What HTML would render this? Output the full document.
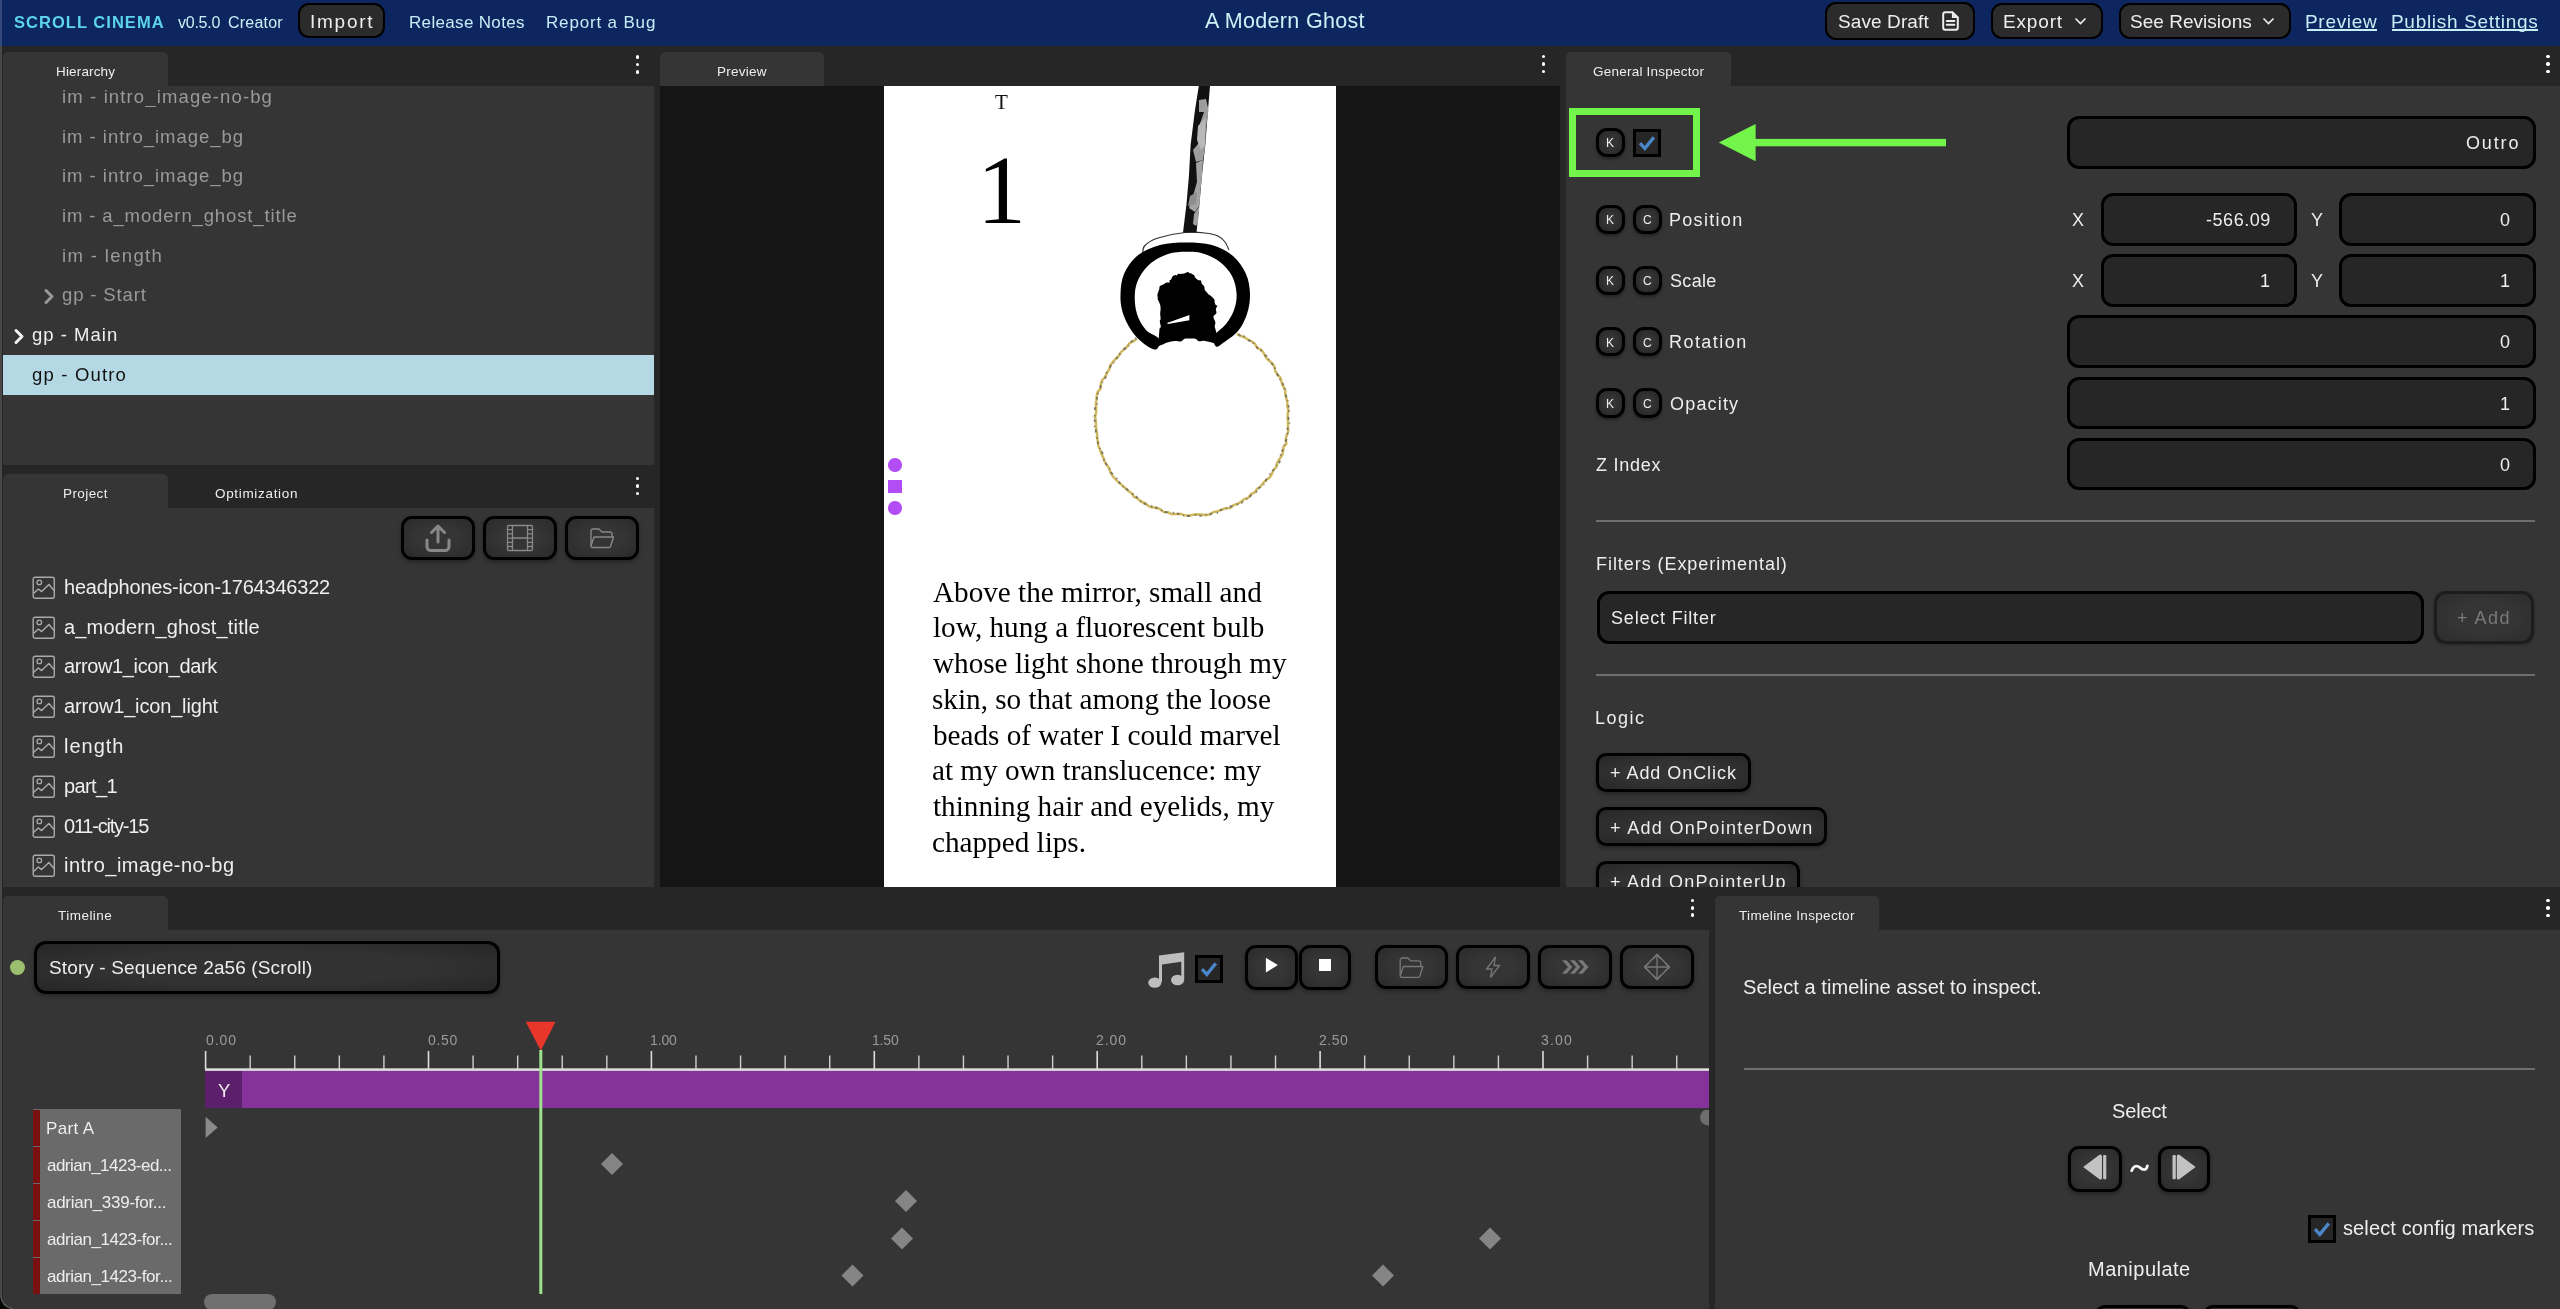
<!DOCTYPE html>
<html><head><meta charset="utf-8"><title>Scroll Cinema</title>
<style>
html,body{margin:0;padding:0;}
body{width:2560px;height:1309px;overflow:hidden;position:relative;background:#262626;font-family:"Liberation Sans",sans-serif;}
body>div,body>svg,div>svg{position:absolute;}
.t{position:absolute;white-space:pre;line-height:1;will-change:transform;}
</style></head><body>
<div style="left:0px;top:0px;width:2560px;height:46px;background:#0d2660;"></div>
<div class="t" style="left:13.50px;top:14.10px;font-family:'Liberation Sans';font-size:16.5px;color:#5cd4ec;font-weight:700;letter-spacing:1.033px;">SCROLL CINEMA</div>
<div class="t" style="left:178.30px;top:15.00px;font-family:'Liberation Sans';font-size:16px;color:#cdeff5;letter-spacing:-0.260px;">v0.5.0</div>
<div class="t" style="left:228.20px;top:15.00px;font-family:'Liberation Sans';font-size:16px;color:#cdeff5;letter-spacing:0.217px;">Creator</div>
<div style="left:298px;top:3.4px;width:87px;height:35px;background:#2b2b2b;border:2px solid #000;border-radius:11px;box-sizing:border-box;"></div>
<div class="t" style="left:310.10px;top:12.00px;font-family:'Liberation Sans';font-size:19px;color:#eeeeee;letter-spacing:1.740px;">Import</div>
<div class="t" style="left:408.70px;top:14.10px;font-family:'Liberation Sans';font-size:17px;color:#c6eef6;letter-spacing:0.333px;">Release Notes</div>
<div class="t" style="left:545.90px;top:14.10px;font-family:'Liberation Sans';font-size:17px;color:#c6eef6;letter-spacing:0.836px;">Report a Bug</div>
<div class="t" style="left:1204.70px;top:10.70px;font-family:'Liberation Sans';font-size:21.5px;color:#cdf2f7;letter-spacing:0.323px;">A Modern Ghost</div>
<div style="left:1824.6px;top:1.8px;width:150.4px;height:38px;background:#2b2b2b;border:2px solid #000;border-radius:11px;box-sizing:border-box;"></div>
<div class="t" style="left:1838.10px;top:11.90px;font-family:'Liberation Sans';font-size:19px;color:#eeeeee;letter-spacing:0.100px;">Save Draft</div>
<svg style="left:1942px;top:11px" width="18" height="20" viewBox="0 0 18 20"><path d="M3.2 1.2h7.3l5.3 5.3v10.3a2 2 0 0 1-2 2H3.2a2 2 0 0 1-2-2V3.2a2 2 0 0 1 2-2z" fill="none" stroke="#eee" stroke-width="2"/><path d="M10.5 1.5v5h5z" fill="#ddd" stroke="#eee" stroke-width="1.2"/><path d="M4.8 9.9h7.5M4.8 13.8h7.5" stroke="#eee" stroke-width="2" stroke-linecap="round"/></svg>
<div style="left:1990.5px;top:3.3px;width:112px;height:35.4px;background:#2b2b2b;border:2px solid #000;border-radius:11px;box-sizing:border-box;"></div>
<div class="t" style="left:2002.80px;top:11.90px;font-family:'Liberation Sans';font-size:19px;color:#eeeeee;letter-spacing:0.840px;">Export</div>
<svg style="left:2074px;top:17px" width="13" height="8" viewBox="0 0 13 8"><path d="M1.5 1.5l5 5 5-5" fill="none" stroke="#eee" stroke-width="1.6"/></svg>
<div style="left:2118.5px;top:3.2px;width:172.5px;height:35.4px;background:#2b2b2b;border:2px solid #000;border-radius:11px;box-sizing:border-box;"></div>
<div class="t" style="left:2130.20px;top:11.90px;font-family:'Liberation Sans';font-size:19px;color:#eeeeee;letter-spacing:0.025px;">See Revisions</div>
<svg style="left:2262px;top:17px" width="13" height="8" viewBox="0 0 13 8"><path d="M1.5 1.5l5 5 5-5" fill="none" stroke="#eee" stroke-width="1.6"/></svg>
<div class="t" style="left:2304.80px;top:11.90px;font-family:'Liberation Sans';font-size:19px;color:#c6eef6;letter-spacing:0.700px;">Preview</div>
<div style="left:2306.6px;top:29px;width:70.4px;height:1.6px;background:#c6eef6;"></div>
<div class="t" style="left:2391.00px;top:11.90px;font-family:'Liberation Sans';font-size:19px;color:#c6eef6;letter-spacing:0.700px;">Publish Settings</div>
<div style="left:2392px;top:29px;width:145.5px;height:1.6px;background:#c6eef6;"></div>
<div style="left:0px;top:0px;width:2px;height:1309px;background:rgba(255,255,255,.16);"></div>
<div style="left:3px;top:52px;width:165px;height:34px;background:#353535;border-radius:5px 5px 0 0;"></div>
<div class="t" style="left:55.75px;top:65.25px;font-family:'Liberation Sans';font-size:13.5px;color:#eeeeee;letter-spacing:0.156px;">Hierarchy</div>
<div style="left:3px;top:86px;width:651px;height:379px;background:#353535;overflow:hidden;"></div>
<div style="left:635.6px;top:55.4px;width:3.6px;height:3.6px;background:#fff;border-radius:50%;"></div>
<div style="left:635.6px;top:62.8px;width:3.6px;height:3.6px;background:#fff;border-radius:50%;"></div>
<div style="left:635.6px;top:70.2px;width:3.6px;height:3.6px;background:#fff;border-radius:50%;"></div>
<div class="t" style="left:62.00px;top:88.00px;font-family:'Liberation Sans';font-size:18.5px;color:#9a9a9a;letter-spacing:1.133px;clip-path:inset(-17px 0 0 0);">im - intro_image-no-bg</div>
<div class="t" style="left:62.00px;top:127.70px;font-family:'Liberation Sans';font-size:18.5px;color:#9a9a9a;letter-spacing:0.972px;">im - intro_image_bg</div>
<div class="t" style="left:62.00px;top:167.40px;font-family:'Liberation Sans';font-size:18.5px;color:#9a9a9a;letter-spacing:0.972px;">im - intro_image_bg</div>
<div class="t" style="left:62.00px;top:207.10px;font-family:'Liberation Sans';font-size:18.5px;color:#9a9a9a;letter-spacing:0.867px;">im - a_modern_ghost_title</div>
<div class="t" style="left:62.00px;top:246.80px;font-family:'Liberation Sans';font-size:18.5px;color:#9a9a9a;letter-spacing:1.350px;">im - length</div>
<svg style="left:42px;top:287px" width="14" height="19" viewBox="0 0 14 19"><path d="M4 3.5l6 6-6 6" fill="none" stroke="#9a9a9a" stroke-width="3" stroke-linecap="round" stroke-linejoin="round"/></svg>
<div class="t" style="left:61.50px;top:286.30px;font-family:'Liberation Sans';font-size:18.5px;color:#9a9a9a;letter-spacing:0.856px;">gp - Start</div>
<svg style="left:12px;top:327px" width="14" height="19" viewBox="0 0 14 19"><path d="M4 3.5l6 6-6 6" fill="none" stroke="#f2f2f2" stroke-width="3" stroke-linecap="round" stroke-linejoin="round"/></svg>
<div class="t" style="left:32.40px;top:326.30px;font-family:'Liberation Sans';font-size:18.5px;color:#f0f0f0;letter-spacing:1.013px;">gp - Main</div>
<div style="left:3px;top:355px;width:651px;height:40px;background:#b4d8e4;"></div>
<div class="t" style="left:32.00px;top:365.80px;font-family:'Liberation Sans';font-size:18.5px;color:#111111;letter-spacing:1.178px;">gp - Outro</div>
<div style="left:3px;top:474px;width:165px;height:34px;background:#353535;border-radius:5px 5px 0 0;"></div>
<div class="t" style="left:62.50px;top:486.80px;font-family:'Liberation Sans';font-size:13.5px;color:#eeeeee;letter-spacing:0.417px;">Project</div>
<div class="t" style="left:215.00px;top:486.80px;font-family:'Liberation Sans';font-size:13.5px;color:#eeeeee;letter-spacing:0.673px;">Optimization</div>
<div style="left:3px;top:508px;width:651px;height:379px;background:#353535;"></div>
<div style="left:635.6px;top:476.8px;width:3.6px;height:3.6px;background:#fff;border-radius:50%;"></div>
<div style="left:635.6px;top:484.2px;width:3.6px;height:3.6px;background:#fff;border-radius:50%;"></div>
<div style="left:635.6px;top:491.6px;width:3.6px;height:3.6px;background:#fff;border-radius:50%;"></div>
<div style="left:401.2px;top:515.8px;width:74px;height:44px;background:radial-gradient(ellipse at center,#353535 40%,#2a2a2a 100%);border:3px solid #000;border-radius:11px;box-sizing:border-box;box-shadow:0 2px 4px rgba(0,0,0,.35);"></div>
<div style="left:401.2px;top:515.8px;width:74px;height:44px"><svg width="74" height="44" viewBox="0 0 74 44" style="left:0;top:0"><path d="M37 26V11M30.5 16.5L37 10l6.5 6.5" fill="none" stroke="#888" stroke-width="3" stroke-linecap="round" stroke-linejoin="round"/><path d="M26 24v6.5a4 4 0 0 0 4 4h14a4 4 0 0 0 4-4V24" fill="none" stroke="#888" stroke-width="3" stroke-linecap="round"/></svg></div>
<div style="left:483px;top:515.8px;width:74px;height:44px;background:radial-gradient(ellipse at center,#353535 40%,#2a2a2a 100%);border:3px solid #000;border-radius:11px;box-sizing:border-box;box-shadow:0 2px 4px rgba(0,0,0,.35);"></div>
<div style="left:483px;top:515.8px;width:74px;height:44px"><svg width="74" height="44" viewBox="0 0 74 44" style="left:0;top:0"><rect x="24.5" y="9.5" width="25" height="25" rx="1.2" fill="none" stroke="#888" stroke-width="1.3"/><path d="M29.5 9.5v25M44.5 9.5v25M29.5 22h15M24.5 13.7h5M24.5 17.9h5M24.5 22.1h5M24.5 26.3h5M24.5 30.5h5M44.5 13.7h5M44.5 17.9h5M44.5 22.1h5M44.5 26.3h5M44.5 30.5h5" fill="none" stroke="#888" stroke-width="1.3"/></svg></div>
<div style="left:565.1px;top:515.8px;width:74px;height:44px;background:radial-gradient(ellipse at center,#353535 40%,#2a2a2a 100%);border:3px solid #000;border-radius:11px;box-sizing:border-box;box-shadow:0 2px 4px rgba(0,0,0,.35);"></div>
<div style="left:565.1px;top:515.8px;width:74px;height:44px"><svg width="74" height="44" viewBox="0 0 74 44" style="left:0;top:0"><g transform="translate(25,12) scale(1.0)"><path d="M1 18V3a2 2 0 0 1 2-2h6l3 3h8a2 2 0 0 1 2 2v3" fill="none" stroke="#888" stroke-width="1.4" stroke-linejoin="round"/><path d="M1 18l3-9h19.5l-3 9.5a1.5 1.5 0 0 1-1.4 1H2.5A1.5 1.5 0 0 1 1 18z" fill="none" stroke="#888" stroke-width="1.4" stroke-linejoin="round"/></g></svg></div>
<svg style="left:32.2px;top:575.8px" width="24" height="24" viewBox="0 0 24 24"><rect x="1.2" y="1.2" width="21.1" height="21.1" rx="2" fill="none" stroke="#aaa" stroke-width="1.4"/><circle cx="7.3" cy="6.4" r="2.3" fill="none" stroke="#aaa" stroke-width="1.3"/><path d="M1.5 17.5L6.4 13L9.6 15.6L16.9 8.5L22 14.5" fill="none" stroke="#aaa" stroke-width="1.4" stroke-linejoin="round"/></svg>
<div class="t" style="left:63.80px;top:576.80px;font-family:'Liberation Sans';font-size:20px;color:#eeeeee;letter-spacing:-0.204px;">headphones-icon-1764346322</div>
<svg style="left:32.2px;top:615.5999999999999px" width="24" height="24" viewBox="0 0 24 24"><rect x="1.2" y="1.2" width="21.1" height="21.1" rx="2" fill="none" stroke="#aaa" stroke-width="1.4"/><circle cx="7.3" cy="6.4" r="2.3" fill="none" stroke="#aaa" stroke-width="1.3"/><path d="M1.5 17.5L6.4 13L9.6 15.6L16.9 8.5L22 14.5" fill="none" stroke="#aaa" stroke-width="1.4" stroke-linejoin="round"/></svg>
<div class="t" style="left:63.80px;top:616.60px;font-family:'Liberation Sans';font-size:20px;color:#eeeeee;letter-spacing:0.174px;">a_modern_ghost_title</div>
<svg style="left:32.2px;top:655.4px" width="24" height="24" viewBox="0 0 24 24"><rect x="1.2" y="1.2" width="21.1" height="21.1" rx="2" fill="none" stroke="#aaa" stroke-width="1.4"/><circle cx="7.3" cy="6.4" r="2.3" fill="none" stroke="#aaa" stroke-width="1.3"/><path d="M1.5 17.5L6.4 13L9.6 15.6L16.9 8.5L22 14.5" fill="none" stroke="#aaa" stroke-width="1.4" stroke-linejoin="round"/></svg>
<div class="t" style="left:63.80px;top:656.40px;font-family:'Liberation Sans';font-size:20px;color:#eeeeee;letter-spacing:-0.380px;">arrow1_icon_dark</div>
<svg style="left:32.2px;top:695.1999999999999px" width="24" height="24" viewBox="0 0 24 24"><rect x="1.2" y="1.2" width="21.1" height="21.1" rx="2" fill="none" stroke="#aaa" stroke-width="1.4"/><circle cx="7.3" cy="6.4" r="2.3" fill="none" stroke="#aaa" stroke-width="1.3"/><path d="M1.5 17.5L6.4 13L9.6 15.6L16.9 8.5L22 14.5" fill="none" stroke="#aaa" stroke-width="1.4" stroke-linejoin="round"/></svg>
<div class="t" style="left:63.80px;top:696.20px;font-family:'Liberation Sans';font-size:20px;color:#eeeeee;letter-spacing:-0.162px;">arrow1_icon_light</div>
<svg style="left:32.2px;top:735.0px" width="24" height="24" viewBox="0 0 24 24"><rect x="1.2" y="1.2" width="21.1" height="21.1" rx="2" fill="none" stroke="#aaa" stroke-width="1.4"/><circle cx="7.3" cy="6.4" r="2.3" fill="none" stroke="#aaa" stroke-width="1.3"/><path d="M1.5 17.5L6.4 13L9.6 15.6L16.9 8.5L22 14.5" fill="none" stroke="#aaa" stroke-width="1.4" stroke-linejoin="round"/></svg>
<div class="t" style="left:63.80px;top:736.00px;font-family:'Liberation Sans';font-size:20px;color:#eeeeee;letter-spacing:1.000px;">length</div>
<svg style="left:32.2px;top:774.8px" width="24" height="24" viewBox="0 0 24 24"><rect x="1.2" y="1.2" width="21.1" height="21.1" rx="2" fill="none" stroke="#aaa" stroke-width="1.4"/><circle cx="7.3" cy="6.4" r="2.3" fill="none" stroke="#aaa" stroke-width="1.3"/><path d="M1.5 17.5L6.4 13L9.6 15.6L16.9 8.5L22 14.5" fill="none" stroke="#aaa" stroke-width="1.4" stroke-linejoin="round"/></svg>
<div class="t" style="left:63.80px;top:775.80px;font-family:'Liberation Sans';font-size:20px;color:#eeeeee;letter-spacing:-0.600px;">part_1</div>
<svg style="left:32.2px;top:814.5999999999999px" width="24" height="24" viewBox="0 0 24 24"><rect x="1.2" y="1.2" width="21.1" height="21.1" rx="2" fill="none" stroke="#aaa" stroke-width="1.4"/><circle cx="7.3" cy="6.4" r="2.3" fill="none" stroke="#aaa" stroke-width="1.3"/><path d="M1.5 17.5L6.4 13L9.6 15.6L16.9 8.5L22 14.5" fill="none" stroke="#aaa" stroke-width="1.4" stroke-linejoin="round"/></svg>
<div class="t" style="left:63.80px;top:815.60px;font-family:'Liberation Sans';font-size:20px;color:#eeeeee;letter-spacing:-1.210px;">011-city-15</div>
<svg style="left:32.2px;top:854.3999999999999px" width="24" height="24" viewBox="0 0 24 24"><rect x="1.2" y="1.2" width="21.1" height="21.1" rx="2" fill="none" stroke="#aaa" stroke-width="1.4"/><circle cx="7.3" cy="6.4" r="2.3" fill="none" stroke="#aaa" stroke-width="1.3"/><path d="M1.5 17.5L6.4 13L9.6 15.6L16.9 8.5L22 14.5" fill="none" stroke="#aaa" stroke-width="1.4" stroke-linejoin="round"/></svg>
<div class="t" style="left:63.80px;top:855.40px;font-family:'Liberation Sans';font-size:20px;color:#eeeeee;letter-spacing:0.481px;">intro_image-no-bg</div>
<div style="left:660px;top:52px;width:164.3px;height:34px;background:#353535;border-radius:5px 5px 0 0;"></div>
<div class="t" style="left:716.80px;top:64.90px;font-family:'Liberation Sans';font-size:13.5px;color:#eeeeee;letter-spacing:0.267px;">Preview</div>
<div style="left:1541.9px;top:54.8px;width:3.6px;height:3.6px;background:#fff;border-radius:50%;"></div>
<div style="left:1541.9px;top:62.2px;width:3.6px;height:3.6px;background:#fff;border-radius:50%;"></div>
<div style="left:1541.9px;top:69.6px;width:3.6px;height:3.6px;background:#fff;border-radius:50%;"></div>
<div style="left:660px;top:86px;width:900px;height:801px;background:#151515;"></div>
<div style="left:884px;top:86px;width:452px;height:801px;background:#ffffff;"></div>
<div class="t" style="left:995.00px;top:92.30px;font-family:'Liberation Serif';font-size:21px;color:#111;">T</div>
<div class="t" style="left:976.90px;top:140.50px;font-family:'Liberation Serif';font-size:98px;color:#000;">1</div>
<div class="t" style="left:933.20px;top:577.50px;font-family:'Liberation Serif';font-size:29.2px;color:#000;">Above the mirror, small and</div>
<div class="t" style="left:933.20px;top:613.28px;font-family:'Liberation Serif';font-size:29.2px;color:#000;">low, hung a fluorescent bulb</div>
<div class="t" style="left:933.20px;top:649.06px;font-family:'Liberation Serif';font-size:29.2px;color:#000;">whose light shone through my</div>
<div class="t" style="left:932.20px;top:684.84px;font-family:'Liberation Serif';font-size:29.2px;color:#000;">skin, so that among the loose</div>
<div class="t" style="left:933.20px;top:720.62px;font-family:'Liberation Serif';font-size:29.2px;color:#000;">beads of water I could marvel</div>
<div class="t" style="left:932.20px;top:756.40px;font-family:'Liberation Serif';font-size:29.2px;color:#000;">at my own translucence: my</div>
<div class="t" style="left:933.20px;top:792.18px;font-family:'Liberation Serif';font-size:29.2px;color:#000;">thinning hair and eyelids, my</div>
<div class="t" style="left:932.20px;top:827.96px;font-family:'Liberation Serif';font-size:29.2px;color:#000;">chapped lips.</div>
<svg style="left:884px;top:86px" width="452" height="801" viewBox="884 86 452 801">
<path d="M1137.0 338.8 L1133.5 341.1 L1129.7 343.1 L1127.2 346.5 L1124.0 349.3 L1121.0 352.2 L1118.8 355.9 L1115.7 358.7 L1112.9 361.9 L1110.3 365.2 L1109.3 369.5 L1106.9 372.9 L1105.3 376.8 L1102.3 380.0 L1100.9 384.0 L1100.8 388.4 L1097.7 391.8 L1096.7 395.9 L1096.4 400.2 L1095.8 404.3 L1096.2 408.6 L1096.1 412.8 L1095.0 416.9 L1095.9 421.0 L1095.9 425.2 L1096.1 429.4 L1097.1 433.4 L1097.0 437.7 L1098.0 441.8 L1098.3 446.0 L1100.2 449.8 L1101.4 453.9 L1103.3 457.6 L1104.7 461.6 L1107.0 465.1 L1109.4 468.5 L1110.5 472.8 L1112.9 476.3 L1115.7 479.5 L1118.6 482.5 L1122.0 485.1 L1125.1 487.9 L1128.1 490.8 L1131.6 493.2 L1134.0 496.8 L1137.9 498.6 L1140.9 501.7 L1145.0 503.0 L1148.2 505.9 L1152.1 507.6 L1156.6 507.6 L1160.4 509.4 L1163.9 512.1 L1168.2 512.3 L1172.1 514.3 L1176.4 513.9 L1180.7 513.8 L1184.7 515.3 L1188.9 515.8 L1193.1 514.8 L1197.2 514.3 L1201.4 514.5 L1205.8 515.2 L1209.8 514.1 L1213.7 512.0 L1217.8 511.2 L1221.7 509.7 L1225.6 508.3 L1230.0 508.1 L1233.3 505.2 L1237.4 504.0 L1240.9 501.8 L1244.2 499.2 L1248.3 497.7 L1250.9 494.2 L1254.8 492.4 L1257.2 488.8 L1260.6 486.4 L1263.2 483.0 L1266.0 480.0 L1269.7 477.5 L1271.9 473.9 L1273.4 469.9 L1276.5 466.9 L1277.3 462.6 L1279.5 459.0 L1282.0 455.5 L1283.1 451.4 L1283.4 447.1 L1286.3 443.6 L1285.8 439.1 L1286.7 435.1 L1288.3 431.1 L1287.9 426.8 L1288.1 422.6 L1287.7 418.5 L1287.7 414.3 L1288.4 410.1 L1287.3 406.0 L1287.3 401.8 L1286.1 397.7 L1285.3 393.6 L1285.1 389.3 L1282.8 385.6 L1281.5 381.7 L1280.3 377.6 L1277.3 374.4 L1275.2 370.8 L1274.4 366.4 L1271.9 363.0 L1268.5 360.3 L1265.8 357.1 L1263.9 353.2 L1261.3 349.9 L1257.2 348.0 L1255.1 344.1 L1251.8 341.5 L1248.0 339.5 L1244.4 337.4 L1240.5 335.8 L1236.8 333.8" fill="none" stroke="#d0b860" stroke-width="2.5" stroke-linejoin="round"/>
<path d="M1136.4 337.9 L1132.9 340.3 L1129.7 343.0 L1127.8 347.2 L1123.9 349.2 L1121.3 352.5 L1118.3 355.4 L1116.4 359.3 L1113.8 362.5 L1110.9 365.6 L1109.1 369.4 L1106.6 372.8 L1105.6 376.9 L1103.8 380.6 L1100.8 384.0 L1100.1 388.1 L1098.6 392.1 L1097.1 396.0 L1097.1 400.3 L1097.1 404.5 L1094.8 408.5 L1095.0 412.7 L1094.6 416.9 L1094.7 421.1 L1094.1 425.3 L1095.9 429.4 L1095.6 433.7 L1097.2 437.6 L1097.7 441.8 L1098.6 445.9 L1100.6 449.7 L1102.6 453.4 L1103.3 457.6 L1104.6 461.6 L1106.8 465.2 L1109.2 468.7 L1111.0 472.5 L1114.3 475.3 L1116.9 478.6 L1119.3 482.0 L1121.2 485.9 L1125.2 487.8 L1128.4 490.4 L1131.6 493.1 L1135.0 495.5 L1138.1 498.4 L1141.2 501.2 L1144.5 503.9 L1148.8 504.8 L1152.5 506.6 L1156.4 508.1 L1160.3 509.5 L1164.0 511.9 L1168.2 512.5 L1172.4 512.7 L1176.6 513.1 L1180.5 515.3 L1184.7 515.5 L1188.9 516.0 L1193.1 514.7 L1197.3 515.3 L1201.6 515.8 L1205.7 514.5 L1210.0 514.7 L1213.7 512.0 L1218.2 512.8 L1221.6 509.5 L1225.8 508.9 L1229.3 506.5 L1233.9 506.5 L1237.5 504.3 L1241.5 502.9 L1244.9 500.3 L1248.6 498.2 L1251.4 494.9 L1255.3 493.1 L1258.1 489.8 L1260.5 486.2 L1264.4 484.2 L1266.1 480.1 L1268.4 476.5 L1270.6 473.0 L1273.6 470.1 L1275.2 466.1 L1278.8 463.3 L1280.7 459.5 L1280.7 455.0 L1282.0 451.0 L1284.3 447.4 L1284.6 443.1 L1286.5 439.3 L1287.9 435.3 L1287.2 430.9 L1288.1 426.8 L1289.5 422.7 L1288.5 418.5 L1288.1 414.3 L1289.2 410.0 L1288.5 405.8 L1288.1 401.6 L1286.8 397.6 L1285.1 393.7 L1284.6 389.5 L1283.6 385.4 L1281.6 381.6 L1279.1 378.1 L1277.4 374.3 L1275.6 370.5 L1274.2 366.5 L1271.5 363.3 L1269.0 359.9 L1266.9 356.2 L1262.9 354.2 L1260.9 350.3 L1257.4 347.9 L1254.6 344.7 L1251.8 341.5 L1247.6 340.1 L1245.1 336.4 L1240.4 335.9 L1237.3 332.9" fill="none" stroke="#5a5a55" stroke-width="1.8" stroke-dasharray="1.5 3 2.5 4 1 3 3 5" opacity=".75"/>
<path d="M1143.0 254.0 C1143.2 252.7 1142.0 248.7 1144.5 246.0 C1147.0 243.3 1151.2 240.2 1158.0 238.0 C1164.8 235.8 1177.2 233.3 1185.0 232.5 C1192.8 231.7 1199.5 232.4 1205.0 233.0 C1210.5 233.6 1214.7 234.5 1218.0 236.0 C1221.3 237.5 1223.2 239.7 1225.0 242.0 C1226.8 244.3 1228.3 248.7 1229.0 250.0" fill="none" stroke="#333" stroke-width="1.2"/>
<path d="M1198.8 86 L1210 86 L1208 110 L1205.3 145 L1202 175 L1199.4 204 L1196.5 232.5 L1183 232.5 L1186.5 204 L1189 175 L1190.6 145 L1195 110 Z" fill="#111"/>
<path d="M1199 100 L1206 99 L1208.5 110 L1206 128 L1205 148 L1203 160 L1196 162 L1193 150 L1198 144 L1199.5 125 L1204 112 L1199 112 Z" fill="#9d9d9d"/>
<path d="M1198 126 L1205.5 118 L1205 145 L1201 150 L1197 140 Z" fill="#b8b8b8"/>
<path d="M1196 163 L1203 160 L1202 176 L1200.5 190 L1199.6 205 L1195 212 L1189 208 L1193 196 L1197 182 Z" fill="#a3a3a3"/>
<path d="M1190 196 L1197 192 L1196 204 L1188 206 Z" fill="#8e8e8e"/>
<path d="M1194 214 L1199.4 206 L1198 222 L1196 226 L1193 224 Z" fill="#a0a0a0"/>
<path d="M1156.0 349.5 C1153.3 350.2 1147.2 346.2 1143.0 343.0 C1138.8 339.8 1134.4 335.2 1131.0 330.0 C1127.6 324.8 1124.2 318.0 1122.5 312.0 C1120.8 306.0 1120.2 300.3 1120.5 294.0 C1120.8 287.7 1121.2 280.3 1124.0 274.0 C1126.8 267.7 1131.0 260.8 1137.0 256.0 C1143.0 251.2 1151.8 247.3 1160.0 245.0 C1168.2 242.7 1177.3 242.4 1186.0 242.4 C1194.7 242.4 1204.2 242.7 1212.0 245.0 C1219.8 247.3 1227.3 251.2 1233.0 256.0 C1238.7 260.8 1243.2 267.7 1246.0 274.0 C1248.8 280.3 1249.8 287.3 1250.0 294.0 C1250.2 300.7 1249.0 307.8 1247.0 314.0 C1245.0 320.2 1242.0 326.2 1238.0 331.0 C1234.0 335.8 1226.7 340.4 1223.0 343.0 C1219.3 345.6 1217.5 347.7 1216.0 346.5 C1214.5 345.3 1212.3 339.8 1214.0 336.0 C1215.7 332.2 1222.7 328.3 1226.0 324.0 C1229.3 319.7 1232.2 315.0 1234.0 310.0 C1235.8 305.0 1236.9 299.7 1236.6 294.0 C1236.3 288.3 1234.8 281.3 1232.0 276.0 C1229.2 270.7 1224.8 265.8 1220.0 262.0 C1215.2 258.2 1208.7 255.2 1203.0 253.5 C1197.3 251.8 1191.8 251.7 1186.0 251.8 C1180.2 251.9 1173.8 252.1 1168.0 254.0 C1162.2 255.9 1155.8 259.0 1151.0 263.0 C1146.2 267.0 1141.7 272.8 1139.0 278.0 C1136.3 283.2 1135.1 288.5 1134.8 294.5 C1134.5 300.5 1135.1 308.1 1137.0 314.0 C1138.9 319.9 1142.3 325.8 1146.0 330.0 C1149.7 334.2 1157.3 335.8 1159.0 339.0 C1160.7 342.2 1158.7 348.8 1156.0 349.5 Z" fill="#000"/>
<path d="M1154.6 347.2 C1153.9 346.8 1156.4 344.2 1157.0 343.0 C1157.7 341.7 1158.1 340.8 1158.4 339.7 C1158.7 338.5 1158.8 337.2 1158.9 336.0 C1159.1 334.8 1159.1 333.8 1159.2 332.5 C1159.3 331.2 1159.4 329.3 1159.6 328.4 C1159.9 327.4 1160.8 328.0 1160.8 326.8 C1160.8 325.6 1159.8 322.6 1159.8 321.3 C1159.7 320.1 1160.6 320.3 1160.6 319.1 C1160.7 317.8 1160.2 315.6 1160.2 313.8 C1160.2 311.9 1160.7 309.8 1160.6 308.2 C1160.6 306.6 1160.4 305.7 1159.9 304.2 C1159.4 302.6 1158.0 300.1 1157.6 299.1 C1157.3 298.1 1157.9 298.8 1157.9 298.1 C1157.8 297.4 1157.3 295.9 1157.4 294.9 C1157.5 293.8 1158.0 292.7 1158.3 291.7 C1158.7 290.7 1159.2 289.5 1159.4 288.6 C1159.7 287.8 1159.1 287.3 1159.6 286.6 C1160.1 286.0 1161.7 285.2 1162.4 284.8 C1163.1 284.4 1163.2 284.6 1163.9 284.2 C1164.6 283.8 1165.6 282.8 1166.6 282.5 C1167.5 282.2 1169.2 282.8 1169.7 282.5 C1170.2 282.1 1169.2 281.0 1169.4 280.5 C1169.6 280.0 1170.5 280.2 1171.1 279.6 C1171.6 278.9 1171.8 277.2 1172.6 276.5 C1173.3 275.7 1174.8 275.2 1175.5 275.1 C1176.1 274.9 1176.0 275.8 1176.5 275.6 C1176.9 275.4 1177.5 274.3 1178.2 274.0 C1178.8 273.7 1179.4 274.0 1180.6 273.9 C1181.7 273.8 1183.7 273.5 1185.0 273.2 C1186.2 272.9 1187.2 272.0 1187.9 272.1 C1188.7 272.1 1188.9 273.0 1189.5 273.2 C1190.0 273.5 1190.5 273.1 1191.2 273.4 C1191.9 273.7 1193.2 274.6 1193.8 275.1 C1194.4 275.5 1194.4 275.6 1194.6 276.1 C1194.8 276.5 1194.7 277.1 1195.3 277.8 C1195.9 278.5 1197.4 279.7 1198.4 280.2 C1199.3 280.6 1200.2 279.9 1200.8 280.5 C1201.3 281.0 1201.4 282.7 1201.7 283.4 C1202.1 284.1 1202.4 284.4 1202.9 284.9 C1203.3 285.4 1203.9 285.5 1204.2 286.4 C1204.6 287.3 1204.6 289.5 1204.9 290.3 C1205.3 291.1 1205.5 290.7 1206.1 291.4 C1206.7 292.1 1208.1 293.9 1208.7 294.6 C1209.4 295.2 1209.3 294.7 1210.0 295.2 C1210.7 295.8 1212.3 297.1 1213.1 297.9 C1213.9 298.8 1214.5 299.6 1214.8 300.2 C1215.0 300.8 1214.3 300.7 1214.5 301.5 C1214.6 302.2 1215.2 304.2 1215.7 304.9 C1216.2 305.6 1217.4 305.2 1217.4 305.8 C1217.5 306.5 1216.1 307.7 1215.9 308.7 C1215.7 309.7 1216.3 311.2 1216.4 312.0 C1216.4 312.8 1216.6 312.8 1216.2 313.4 C1215.8 314.1 1214.2 315.0 1213.8 315.8 C1213.4 316.6 1213.4 317.1 1213.7 318.2 C1214.0 319.3 1215.3 321.1 1215.4 322.5 C1215.6 323.8 1214.7 325.2 1214.7 326.3 C1214.7 327.4 1215.1 327.8 1215.4 328.9 C1215.7 330.1 1216.3 332.2 1216.6 333.3 C1216.9 334.5 1217.2 335.3 1217.2 336.0 C1217.3 336.8 1216.8 336.9 1216.7 337.8 C1216.7 338.6 1216.8 340.2 1217.0 341.0 C1217.2 341.7 1217.6 341.6 1217.9 342.3 C1218.3 343.0 1219.9 345.0 1219.3 345.2 C1218.7 345.4 1216.4 343.8 1214.6 343.3 C1212.9 342.7 1210.6 342.3 1208.8 341.8 C1207.0 341.4 1205.7 340.8 1204.0 340.7 C1202.4 340.6 1200.3 341.5 1198.9 341.2 C1197.4 340.9 1196.8 339.3 1195.3 338.8 C1193.7 338.4 1191.2 338.6 1189.4 338.6 C1187.6 338.6 1186.1 338.3 1184.7 338.8 C1183.2 339.2 1182.5 341.2 1180.8 341.5 C1179.2 341.9 1177.2 340.8 1174.9 341.0 C1172.7 341.1 1169.6 341.7 1167.3 342.4 C1165.1 343.1 1163.4 344.3 1161.3 345.1 C1159.2 345.9 1155.3 347.5 1154.6 347.2 Z" fill="#000"/>
<path d="M1167 323 L1189.4 315 L1189.4 320.3 L1168 324 Z" fill="#fff"/>
</svg>
<div style="left:888px;top:458.1px;width:13.5px;height:13.5px;background:#b24cf5;border-radius:50%;"></div>
<div style="left:888px;top:501.1px;width:13.5px;height:13.5px;background:#b24cf5;border-radius:50%;"></div>
<div style="left:888px;top:480px;width:13.5px;height:13px;background:#b24cf5;"></div>
<div style="left:1566px;top:52px;width:165px;height:34px;background:#353535;border-radius:5px 5px 0 0;"></div>
<div class="t" style="left:1592.60px;top:65.00px;font-family:'Liberation Sans';font-size:13.5px;color:#eeeeee;letter-spacing:0.225px;">General Inspector</div>
<div style="left:2546.2px;top:54.8px;width:3.6px;height:3.6px;background:#fff;border-radius:50%;"></div>
<div style="left:2546.2px;top:62.2px;width:3.6px;height:3.6px;background:#fff;border-radius:50%;"></div>
<div style="left:2546.2px;top:69.6px;width:3.6px;height:3.6px;background:#fff;border-radius:50%;"></div>
<div style="left:1566px;top:86px;width:994px;height:801px;background:#353535;overflow:hidden;"></div>
<div style="left:1569px;top:107.7px;width:131px;height:69.2px;border:7px solid #72f44b;box-sizing:border-box;"></div>
<div style="left:1596px;top:127.9px;width:29.3px;height:29.3px;background:radial-gradient(ellipse at center,#353535 30%,#252525 100%);border:3px solid #000;border-radius:11px;box-sizing:border-box;box-shadow:0 2px 3px rgba(0,0,0,.35);"></div>
<div class="t" style="left:1606.10px;top:137.20px;font-family:'Liberation Sans';font-size:12px;color:#eeeeee;">K</div>
<div style="left:1633px;top:128.6px;width:28px;height:28px;background:#262626;border:3px solid #000;box-sizing:border-box;"></div>
<svg style="left:1633px;top:128.6px" width="28" height="28" viewBox="0 0 28 28"><path d="M7 14.2l4.8 5.2 9-11" fill="none" stroke="#4a86c8" stroke-width="3.3" stroke-linejoin="miter"/></svg>
<svg style="left:1715px;top:120px" width="235" height="45" viewBox="1715 120 235 45"><path d="M1718.8 142.5 L1755.6 124 L1755.6 161.2 Z" fill="#72f44b"/><rect x="1754" y="138.9" width="192" height="7.4" fill="#72f44b"/></svg>
<div style="left:2067px;top:116px;width:469px;height:52.7px;background:#262626;border:3px solid #000;border-radius:12px;box-sizing:border-box;"></div>
<div class="t" style="left:2465.90px;top:133.80px;font-family:'Liberation Sans';font-size:18px;color:#eeeeee;letter-spacing:1.850px;">Outro</div>
<div style="left:1596px;top:205px;width:29.3px;height:29.3px;background:radial-gradient(ellipse at center,#353535 30%,#252525 100%);border:3px solid #000;border-radius:11px;box-sizing:border-box;box-shadow:0 2px 3px rgba(0,0,0,.35);"></div>
<div class="t" style="left:1606.10px;top:214.30px;font-family:'Liberation Sans';font-size:12px;color:#eeeeee;">K</div>
<div style="left:1633px;top:205px;width:29.3px;height:29.3px;background:radial-gradient(ellipse at center,#353535 30%,#252525 100%);border:3px solid #000;border-radius:11px;box-sizing:border-box;box-shadow:0 2px 3px rgba(0,0,0,.35);"></div>
<div class="t" style="left:1642.90px;top:214.30px;font-family:'Liberation Sans';font-size:12px;color:#eeeeee;">C</div>
<div class="t" style="left:1669.40px;top:211.20px;font-family:'Liberation Sans';font-size:18px;color:#eeeeee;letter-spacing:1.300px;">Position</div>
<div class="t" style="left:2071.90px;top:211.20px;font-family:'Liberation Sans';font-size:18px;color:#eeeeee;">X</div>
<div style="left:2100.8px;top:193.2px;width:196.6px;height:53.2px;background:#262626;border:3px solid #000;border-radius:12px;box-sizing:border-box;"></div>
<div class="t" style="left:2206.00px;top:211.20px;font-family:'Liberation Sans';font-size:18px;color:#eeeeee;letter-spacing:0.550px;">-566.09</div>
<div class="t" style="left:2311.00px;top:211.20px;font-family:'Liberation Sans';font-size:18px;color:#eeeeee;">Y</div>
<div style="left:2338.8px;top:193.2px;width:197.2px;height:53.2px;background:#262626;border:3px solid #000;border-radius:12px;box-sizing:border-box;"></div>
<div class="t" style="left:2499.60px;top:211.20px;font-family:'Liberation Sans';font-size:18px;color:#eeeeee;">0</div>
<div style="left:1596px;top:266.1px;width:29.3px;height:29.3px;background:radial-gradient(ellipse at center,#353535 30%,#252525 100%);border:3px solid #000;border-radius:11px;box-sizing:border-box;box-shadow:0 2px 3px rgba(0,0,0,.35);"></div>
<div class="t" style="left:1606.10px;top:275.40px;font-family:'Liberation Sans';font-size:12px;color:#eeeeee;">K</div>
<div style="left:1633px;top:266.1px;width:29.3px;height:29.3px;background:radial-gradient(ellipse at center,#353535 30%,#252525 100%);border:3px solid #000;border-radius:11px;box-sizing:border-box;box-shadow:0 2px 3px rgba(0,0,0,.35);"></div>
<div class="t" style="left:1642.90px;top:275.40px;font-family:'Liberation Sans';font-size:12px;color:#eeeeee;">C</div>
<div class="t" style="left:1670.40px;top:272.30px;font-family:'Liberation Sans';font-size:18px;color:#eeeeee;letter-spacing:0.338px;">Scale</div>
<div class="t" style="left:2071.90px;top:272.30px;font-family:'Liberation Sans';font-size:18px;color:#eeeeee;">X</div>
<div style="left:2100.8px;top:254.3px;width:196.6px;height:53.2px;background:#262626;border:3px solid #000;border-radius:12px;box-sizing:border-box;"></div>
<div class="t" style="left:2260.30px;top:272.30px;font-family:'Liberation Sans';font-size:18px;color:#eeeeee;">1</div>
<div class="t" style="left:2311.00px;top:272.30px;font-family:'Liberation Sans';font-size:18px;color:#eeeeee;">Y</div>
<div style="left:2338.8px;top:254.3px;width:197.2px;height:53.2px;background:#262626;border:3px solid #000;border-radius:12px;box-sizing:border-box;"></div>
<div class="t" style="left:2499.60px;top:272.30px;font-family:'Liberation Sans';font-size:18px;color:#eeeeee;">1</div>
<div style="left:1596px;top:327.2px;width:29.3px;height:29.3px;background:radial-gradient(ellipse at center,#353535 30%,#252525 100%);border:3px solid #000;border-radius:11px;box-sizing:border-box;box-shadow:0 2px 3px rgba(0,0,0,.35);"></div>
<div class="t" style="left:1606.10px;top:336.50px;font-family:'Liberation Sans';font-size:12px;color:#eeeeee;">K</div>
<div style="left:1633px;top:327.2px;width:29.3px;height:29.3px;background:radial-gradient(ellipse at center,#353535 30%,#252525 100%);border:3px solid #000;border-radius:11px;box-sizing:border-box;box-shadow:0 2px 3px rgba(0,0,0,.35);"></div>
<div class="t" style="left:1642.90px;top:336.50px;font-family:'Liberation Sans';font-size:12px;color:#eeeeee;">C</div>
<div class="t" style="left:1669.40px;top:333.40px;font-family:'Liberation Sans';font-size:18px;color:#eeeeee;letter-spacing:1.443px;">Rotation</div>
<div style="left:2067px;top:315.4px;width:469px;height:52.7px;background:#262626;border:3px solid #000;border-radius:12px;box-sizing:border-box;"></div>
<div class="t" style="left:2499.60px;top:333.40px;font-family:'Liberation Sans';font-size:18px;color:#eeeeee;">0</div>
<div style="left:1596px;top:388.3px;width:29.3px;height:29.3px;background:radial-gradient(ellipse at center,#353535 30%,#252525 100%);border:3px solid #000;border-radius:11px;box-sizing:border-box;box-shadow:0 2px 3px rgba(0,0,0,.35);"></div>
<div class="t" style="left:1606.10px;top:397.60px;font-family:'Liberation Sans';font-size:12px;color:#eeeeee;">K</div>
<div style="left:1633px;top:388.3px;width:29.3px;height:29.3px;background:radial-gradient(ellipse at center,#353535 30%,#252525 100%);border:3px solid #000;border-radius:11px;box-sizing:border-box;box-shadow:0 2px 3px rgba(0,0,0,.35);"></div>
<div class="t" style="left:1642.90px;top:397.60px;font-family:'Liberation Sans';font-size:12px;color:#eeeeee;">C</div>
<div class="t" style="left:1670.40px;top:394.50px;font-family:'Liberation Sans';font-size:18px;color:#eeeeee;letter-spacing:1.183px;">Opacity</div>
<div style="left:2067px;top:376.5px;width:469px;height:52.7px;background:#262626;border:3px solid #000;border-radius:12px;box-sizing:border-box;"></div>
<div class="t" style="left:2499.60px;top:394.50px;font-family:'Liberation Sans';font-size:18px;color:#eeeeee;">1</div>
<div class="t" style="left:1596.00px;top:455.60px;font-family:'Liberation Sans';font-size:18px;color:#eeeeee;letter-spacing:0.733px;">Z Index</div>
<div style="left:2067px;top:437.6px;width:469px;height:52.7px;background:#262626;border:3px solid #000;border-radius:12px;box-sizing:border-box;"></div>
<div class="t" style="left:2499.60px;top:455.60px;font-family:'Liberation Sans';font-size:18px;color:#eeeeee;">0</div>
<div style="left:1596px;top:520px;width:939px;height:1.5px;background:#6e6e6e;"></div>
<div class="t" style="left:1595.50px;top:555.30px;font-family:'Liberation Sans';font-size:18px;color:#eeeeee;letter-spacing:0.943px;">Filters (Experimental)</div>
<div style="left:1597px;top:591.4px;width:827px;height:52.9px;background:#262626;border:3px solid #000;border-radius:12px;box-sizing:border-box;"></div>
<div class="t" style="left:1611.20px;top:609.10px;font-family:'Liberation Sans';font-size:18px;color:#eeeeee;letter-spacing:0.808px;">Select Filter</div>
<div style="left:2434.2px;top:591.3px;width:100.3px;height:53.2px;background:radial-gradient(ellipse at center,#353535 45%,#2c2c2c 100%);border:3px solid #1c1c1c;border-radius:12px;box-sizing:border-box;box-shadow:0 1px 3px rgba(0,0,0,.3);"></div>
<div class="t" style="left:2457.10px;top:609.10px;font-family:'Liberation Sans';font-size:18px;color:#7a7a7a;letter-spacing:1.475px;">+ Add</div>
<div style="left:1596px;top:674px;width:939px;height:1.5px;background:#6e6e6e;"></div>
<div class="t" style="left:1595.00px;top:709.00px;font-family:'Liberation Sans';font-size:18px;color:#eeeeee;letter-spacing:1.500px;">Logic</div>
<div style="left:1596px;top:752.7px;width:155.4px;height:39px;background:radial-gradient(ellipse at center,#333 45%,#272727 100%);border:3px solid #000;border-radius:10px;box-sizing:border-box;box-shadow:0 2px 4px rgba(0,0,0,.35);"></div>
<div class="t" style="left:1610.40px;top:763.80px;font-family:'Liberation Sans';font-size:18px;color:#eeeeee;letter-spacing:0.950px;">+ Add OnClick</div>
<div style="left:1596px;top:807px;width:230.8px;height:39px;background:radial-gradient(ellipse at center,#333 45%,#272727 100%);border:3px solid #000;border-radius:10px;box-sizing:border-box;box-shadow:0 2px 4px rgba(0,0,0,.35);"></div>
<div class="t" style="left:1610.40px;top:818.50px;font-family:'Liberation Sans';font-size:18px;color:#eeeeee;letter-spacing:1.311px;">+ Add OnPointerDown</div>
<div style="left:1596px;top:861px;width:203.5px;height:39px;background:radial-gradient(ellipse at center,#333 45%,#272727 100%);border:3px solid #000;border-radius:10px;box-sizing:border-box;box-shadow:0 2px 4px rgba(0,0,0,.35);"></div>
<div class="t" style="left:1610.40px;top:872.60px;font-family:'Liberation Sans';font-size:18px;color:#eeeeee;letter-spacing:1.238px;">+ Add OnPointerUp</div>
<div style="left:1566px;top:887px;width:994px;height:43px;background:#262626;"></div>
<div style="left:3px;top:896px;width:165px;height:34px;background:#353535;border-radius:5px 5px 0 0;"></div>
<div class="t" style="left:58.40px;top:908.60px;font-family:'Liberation Sans';font-size:13.5px;color:#eeeeee;letter-spacing:0.471px;">Timeline</div>
<div style="left:1690.5px;top:898.6px;width:3.6px;height:3.6px;background:#fff;border-radius:50%;"></div>
<div style="left:1690.5px;top:906px;width:3.6px;height:3.6px;background:#fff;border-radius:50%;"></div>
<div style="left:1690.5px;top:913.4px;width:3.6px;height:3.6px;background:#fff;border-radius:50%;"></div>
<div style="left:3px;top:930px;width:1706px;height:379px;background:#353535;"></div>
<div style="left:10.1px;top:959.7px;width:15.3px;height:15.3px;background:#9bbf6e;border-radius:50%;"></div>
<div style="left:34.2px;top:940.7px;width:466.3px;height:53.2px;background:radial-gradient(ellipse at center,#323232 50%,#262626 100%);border:3px solid #000;border-radius:12px;box-sizing:border-box;box-shadow:0 2px 4px rgba(0,0,0,.3);"></div>
<div class="t" style="left:48.50px;top:957.50px;font-family:'Liberation Sans';font-size:19px;color:#eeeeee;letter-spacing:0.124px;">Story - Sequence 2a56 (Scroll)</div>
<svg style="left:1145px;top:950px" width="42" height="40" viewBox="1145 950 42 40"><path d="M1159 963.8 L1159 982 L1162 982 L1162 964.5 L1181.3 961.8 L1181.3 980 L1184.2 980 L1184.2 952.2 L1159 955.5 Z" fill="#bdbdbd"/><ellipse cx="1154.8" cy="982.6" rx="6.6" ry="5.2" fill="#bdbdbd"/><ellipse cx="1177.6" cy="980" rx="6.6" ry="5.2" fill="#bdbdbd"/></svg>
<div style="left:1195px;top:954.9px;width:28px;height:28px;background:#262626;border:3px solid #000;box-sizing:border-box;"></div>
<svg style="left:1195px;top:954.9px" width="28" height="28" viewBox="0 0 28 28"><path d="M7 14.2l4.8 5.2 9-11" fill="none" stroke="#4a86c8" stroke-width="3.3" stroke-linejoin="miter"/></svg>
<div style="left:1245.3px;top:944.5px;width:52.4px;height:45.1px;background:radial-gradient(ellipse at center,#353535 40%,#2a2a2a 100%);border:3px solid #000;border-radius:11px;box-sizing:border-box;box-shadow:0 2px 4px rgba(0,0,0,.35);"></div>
<svg style="left:1245px;top:944px" width="53" height="46" viewBox="1245 944 53 46"><path d="M1265.9 957.8 L1277.9 965.1 L1265.9 972.4 Z" fill="#fff"/></svg>
<div style="left:1299px;top:944.5px;width:52.4px;height:45.1px;background:radial-gradient(ellipse at center,#353535 40%,#2a2a2a 100%);border:3px solid #000;border-radius:11px;box-sizing:border-box;box-shadow:0 2px 4px rgba(0,0,0,.35);"></div>
<div style="left:1319.2px;top:959.1px;width:12.3px;height:12px;background:#fff;"></div>
<div style="left:1374.5px;top:945.3px;width:73.5px;height:43.8px;background:radial-gradient(ellipse at center,#353535 40%,#2a2a2a 100%);border:3px solid #000;border-radius:11px;box-sizing:border-box;box-shadow:0 2px 4px rgba(0,0,0,.35);"></div>
<div style="left:1456.4px;top:945.3px;width:73.5px;height:43.8px;background:radial-gradient(ellipse at center,#353535 40%,#2a2a2a 100%);border:3px solid #000;border-radius:11px;box-sizing:border-box;box-shadow:0 2px 4px rgba(0,0,0,.35);"></div>
<div style="left:1538.2px;top:945.3px;width:73.5px;height:43.8px;background:radial-gradient(ellipse at center,#353535 40%,#2a2a2a 100%);border:3px solid #000;border-radius:11px;box-sizing:border-box;box-shadow:0 2px 4px rgba(0,0,0,.35);"></div>
<div style="left:1620px;top:945.3px;width:73.5px;height:43.8px;background:radial-gradient(ellipse at center,#353535 40%,#2a2a2a 100%);border:3px solid #000;border-radius:11px;box-sizing:border-box;box-shadow:0 2px 4px rgba(0,0,0,.35);"></div>
<svg style="left:1399px;top:957px" width="25" height="22" viewBox="0 0 25 22"><path d="M1.2 18.5V3a2 2 0 0 1 2-2h5.5l2.8 2.8h8.2a2 2 0 0 1 2 2V9" fill="none" stroke="#777" stroke-width="1.3" stroke-linejoin="round"/><path d="M1.2 19l3.2-9.5h19.4l-3 9.8a1.5 1.5 0 0 1-1.4 1H2.6a1.4 1.4 0 0 1-1.4-1.3z" fill="none" stroke="#777" stroke-width="1.3" stroke-linejoin="round"/></svg>
<svg style="left:1485px;top:956px" width="16" height="23" viewBox="0 0 16 23"><path d="M10.5 1 L1.5 13 L7 13 L5.5 21.5 L14.5 9.5 L9 9.5 Z" fill="none" stroke="#777" stroke-width="1.3" stroke-linejoin="miter"/></svg>
<svg style="left:1561px;top:959px" width="28" height="16" viewBox="0 0 28 16"><path d="M1 1.2h4.5l6 6.8-6 6.8H1l6-6.8z M9 1.2h4.5l6 6.8-6 6.8H9l6-6.8z M17 1.2h4.5l6 6.8-6 6.8H17l6-6.8z" fill="#777"/></svg>
<svg style="left:1643px;top:953px" width="28" height="28" viewBox="0 0 28 28"><path d="M14 1.5V26.5M1.5 14H26.5M14 1.5L1.5 14L14 26.5L26.5 14Z" fill="none" stroke="#777" stroke-width="1.3"/><path d="M14 1.5L10 6M14 1.5L18 6M14 26.5L10 22M14 26.5L18 22M1.5 14L6 10M1.5 14L6 18M26.5 14L22 10M26.5 14L22 18" fill="none" stroke="#777" stroke-width="1.3"/></svg>
<div class="t" style="left:205.50px;top:1033.30px;font-family:'Liberation Sans';font-size:14px;color:#9a9a9a;letter-spacing:0.900px;">0.00</div>
<div class="t" style="left:428.00px;top:1033.30px;font-family:'Liberation Sans';font-size:14px;color:#9a9a9a;letter-spacing:0.667px;">0.50</div>
<div class="t" style="left:650.40px;top:1033.30px;font-family:'Liberation Sans';font-size:14px;color:#9a9a9a;letter-spacing:-0.133px;">1.00</div>
<div class="t" style="left:872.30px;top:1033.30px;font-family:'Liberation Sans';font-size:14px;color:#9a9a9a;letter-spacing:-0.167px;">1.50</div>
<div class="t" style="left:1095.90px;top:1033.30px;font-family:'Liberation Sans';font-size:14px;color:#9a9a9a;letter-spacing:0.933px;">2.00</div>
<div class="t" style="left:1318.80px;top:1033.30px;font-family:'Liberation Sans';font-size:14px;color:#9a9a9a;letter-spacing:0.533px;">2.50</div>
<div class="t" style="left:1540.50px;top:1033.30px;font-family:'Liberation Sans';font-size:14px;color:#9a9a9a;letter-spacing:1.167px;">3.00</div>
<svg style="left:0;top:1000px" width="1709" height="80" viewBox="0 1000 1709 80"><rect x="204.80" y="1051" width="1.6" height="18" fill="#dddddd"/><rect x="249.48" y="1055.5" width="1.4" height="13.5" fill="#cfcfcf"/><rect x="294.06" y="1055.5" width="1.4" height="13.5" fill="#cfcfcf"/><rect x="338.64" y="1055.5" width="1.4" height="13.5" fill="#cfcfcf"/><rect x="383.22" y="1055.5" width="1.4" height="13.5" fill="#cfcfcf"/><rect x="427.70" y="1051" width="1.6" height="18" fill="#dddddd"/><rect x="472.38" y="1055.5" width="1.4" height="13.5" fill="#cfcfcf"/><rect x="516.96" y="1055.5" width="1.4" height="13.5" fill="#cfcfcf"/><rect x="561.54" y="1055.5" width="1.4" height="13.5" fill="#cfcfcf"/><rect x="606.12" y="1055.5" width="1.4" height="13.5" fill="#cfcfcf"/><rect x="650.60" y="1051" width="1.6" height="18" fill="#dddddd"/><rect x="695.28" y="1055.5" width="1.4" height="13.5" fill="#cfcfcf"/><rect x="739.86" y="1055.5" width="1.4" height="13.5" fill="#cfcfcf"/><rect x="784.44" y="1055.5" width="1.4" height="13.5" fill="#cfcfcf"/><rect x="829.02" y="1055.5" width="1.4" height="13.5" fill="#cfcfcf"/><rect x="873.50" y="1051" width="1.6" height="18" fill="#dddddd"/><rect x="918.18" y="1055.5" width="1.4" height="13.5" fill="#cfcfcf"/><rect x="962.76" y="1055.5" width="1.4" height="13.5" fill="#cfcfcf"/><rect x="1007.34" y="1055.5" width="1.4" height="13.5" fill="#cfcfcf"/><rect x="1051.92" y="1055.5" width="1.4" height="13.5" fill="#cfcfcf"/><rect x="1096.40" y="1051" width="1.6" height="18" fill="#dddddd"/><rect x="1141.08" y="1055.5" width="1.4" height="13.5" fill="#cfcfcf"/><rect x="1185.66" y="1055.5" width="1.4" height="13.5" fill="#cfcfcf"/><rect x="1230.24" y="1055.5" width="1.4" height="13.5" fill="#cfcfcf"/><rect x="1274.82" y="1055.5" width="1.4" height="13.5" fill="#cfcfcf"/><rect x="1319.30" y="1051" width="1.6" height="18" fill="#dddddd"/><rect x="1363.98" y="1055.5" width="1.4" height="13.5" fill="#cfcfcf"/><rect x="1408.56" y="1055.5" width="1.4" height="13.5" fill="#cfcfcf"/><rect x="1453.14" y="1055.5" width="1.4" height="13.5" fill="#cfcfcf"/><rect x="1497.72" y="1055.5" width="1.4" height="13.5" fill="#cfcfcf"/><rect x="1542.20" y="1051" width="1.6" height="18" fill="#dddddd"/><rect x="1586.88" y="1055.5" width="1.4" height="13.5" fill="#cfcfcf"/><rect x="1631.46" y="1055.5" width="1.4" height="13.5" fill="#cfcfcf"/><rect x="1676.04" y="1055.5" width="1.4" height="13.5" fill="#cfcfcf"/><rect x="205" y="1068.3" width="1504" height="2.6" fill="#dddddd"/></svg>
<div style="left:205px;top:1071px;width:1504px;height:36.7px;background:#85339b;"></div>
<div style="left:205px;top:1071px;width:36.9px;height:36.7px;background:#5b1f6b;"></div>
<div class="t" style="left:217.90px;top:1081.70px;font-family:'Liberation Sans';font-size:18.5px;color:#eeeeee;">Y</div>
<div style="left:32.6px;top:1109px;width:148.4px;height:37px;background:#6a6a6a;"></div>
<div style="left:32.6px;top:1109.8px;width:7.4px;height:36.2px;background:#7a1111;"></div>
<div class="t" style="left:46.10px;top:1119.60px;font-family:'Liberation Sans';font-size:17px;color:#eeeeee;letter-spacing:0.380px;">Part A</div>
<div style="left:32.6px;top:1146px;width:148.4px;height:37px;background:#6a6a6a;"></div>
<div style="left:32.6px;top:1146.8px;width:7.4px;height:36.2px;background:#7a1111;"></div>
<div class="t" style="left:47.10px;top:1156.60px;font-family:'Liberation Sans';font-size:17px;color:#eeeeee;letter-spacing:-0.519px;">adrian_1423-ed...</div>
<div style="left:32.6px;top:1183px;width:148.4px;height:37px;background:#6a6a6a;"></div>
<div style="left:32.6px;top:1183.8px;width:7.4px;height:36.2px;background:#7a1111;"></div>
<div class="t" style="left:47.10px;top:1193.60px;font-family:'Liberation Sans';font-size:17px;color:#eeeeee;letter-spacing:-0.269px;">adrian_339-for...</div>
<div style="left:32.6px;top:1220px;width:148.4px;height:37px;background:#6a6a6a;"></div>
<div style="left:32.6px;top:1220.8px;width:7.4px;height:36.2px;background:#7a1111;"></div>
<div class="t" style="left:47.10px;top:1230.60px;font-family:'Liberation Sans';font-size:17px;color:#eeeeee;letter-spacing:-0.447px;">adrian_1423-for...</div>
<div style="left:32.6px;top:1257px;width:148.4px;height:37px;background:#6a6a6a;"></div>
<div style="left:32.6px;top:1257.8px;width:7.4px;height:36.2px;background:#7a1111;"></div>
<div class="t" style="left:47.10px;top:1267.60px;font-family:'Liberation Sans';font-size:17px;color:#eeeeee;letter-spacing:-0.447px;">adrian_1423-for...</div>
<svg style="left:200px;top:1110px" width="1510" height="185" viewBox="200 1110 1510 185"><path d="M205.6 1116.8 L217.7 1127.4 L205.6 1138 Z" fill="#8a8a8a"/><path d="M612 1153 L623 1164 L612 1175 L601 1164 Z" fill="#858585"/><path d="M906 1190 L917 1201 L906 1212 L895 1201 Z" fill="#858585"/><path d="M902 1227.5 L913 1238.5 L902 1249.5 L891 1238.5 Z" fill="#858585"/><path d="M1490 1227.5 L1501 1238.5 L1490 1249.5 L1479 1238.5 Z" fill="#858585"/><path d="M852.5 1264.5 L863.5 1275.5 L852.5 1286.5 L841.5 1275.5 Z" fill="#858585"/><path d="M1383 1264.5 L1394 1275.5 L1383 1286.5 L1372 1275.5 Z" fill="#858585"/><circle cx="1708" cy="1117.4" r="8" fill="#6e6e6e"/></svg>
<div style="left:1709px;top:1100px;width:6px;height:30px;background:#262626;"></div>
<svg style="left:520px;top:1018px" width="40" height="280" viewBox="520 1018 40 280"><path d="M525.7 1021.8 L555.5 1021.8 L540.8 1050.8 Z" fill="#e8372a"/><rect x="539.3" y="1050" width="3" height="244" fill="#9ee28c"/></svg>
<div style="left:203.7px;top:1294px;width:72.3px;height:16px;background:#707070;border-radius:8px;"></div>
<svg style="left:0;top:1289px" width="24" height="20" viewBox="0 1289 24 20"><path d="M0 1296 Q1.5 1307.5 12 1309 L0 1309 Z" fill="#070a04"/><path d="M1 1296.5 Q2.5 1307 12.5 1308.6" fill="none" stroke="#5a5a5a" stroke-width="1.3"/></svg>
<div style="left:1715px;top:896px;width:164px;height:34px;background:#353535;border-radius:5px 5px 0 0;"></div>
<div class="t" style="left:1738.90px;top:908.60px;font-family:'Liberation Sans';font-size:13.5px;color:#eeeeee;letter-spacing:0.329px;">Timeline Inspector</div>
<div style="left:2546.2px;top:898.7px;width:3.6px;height:3.6px;background:#fff;border-radius:50%;"></div>
<div style="left:2546.2px;top:906.1px;width:3.6px;height:3.6px;background:#fff;border-radius:50%;"></div>
<div style="left:2546.2px;top:913.5px;width:3.6px;height:3.6px;background:#fff;border-radius:50%;"></div>
<div style="left:1715px;top:930px;width:845px;height:379px;background:#353535;"></div>
<div class="t" style="left:1742.90px;top:976.50px;font-family:'Liberation Sans';font-size:20px;color:#eeeeee;letter-spacing:0.059px;">Select a timeline asset to inspect.</div>
<div style="left:1744px;top:1068px;width:791px;height:1.6px;background:#6e6e6e;"></div>
<div class="t" style="left:2111.50px;top:1100.80px;font-family:'Liberation Sans';font-size:20px;color:#eeeeee;letter-spacing:-0.160px;">Select</div>
<div style="left:2068.1px;top:1146.3px;width:53.5px;height:45.6px;background:radial-gradient(ellipse at center,#353535 40%,#2a2a2a 100%);border:3px solid #000;border-radius:11px;box-sizing:border-box;box-shadow:0 2px 4px rgba(0,0,0,.35);"></div>
<svg style="left:2068px;top:1146px" width="54" height="46" viewBox="2068 1146 54 46"><path d="M2084.2 1167 L2099.6 1155.6 Q2101.3 1154.6 2101.3 1156.5 L2101.3 1177.6 Q2101.3 1179.5 2099.6 1178.4 Z" fill="#c2c2c2" stroke="#c2c2c2" stroke-width="1.4" stroke-linejoin="round"/><rect x="2103.1" y="1155" width="3.2" height="24.2" rx="1" fill="#c2c2c2"/></svg>
<svg style="left:2128px;top:1162px" width="23" height="14" viewBox="2128 1162 23 14"><path d="M2131.6 1170.8 C2133.5 1165.5 2137 1165 2140 1167.6 C2143 1170.3 2146.5 1170.8 2147.4 1165.8" fill="none" stroke="#f2f2f2" stroke-width="2.8" stroke-linecap="round"/></svg>
<div style="left:2157.5px;top:1146.3px;width:52.5px;height:45.6px;background:radial-gradient(ellipse at center,#353535 40%,#2a2a2a 100%);border:3px solid #000;border-radius:11px;box-sizing:border-box;box-shadow:0 2px 4px rgba(0,0,0,.35);"></div>
<svg style="left:2157px;top:1146px" width="54" height="46" viewBox="2157 1146 54 46"><path d="M2194.6 1167 L2179.2 1155.6 Q2177.5 1154.6 2177.5 1156.5 L2177.5 1177.6 Q2177.5 1179.5 2179.2 1178.4 Z" fill="#c2c2c2" stroke="#c2c2c2" stroke-width="1.4" stroke-linejoin="round"/><rect x="2172.5" y="1155" width="3.3" height="24.2" rx="1" fill="#c2c2c2"/></svg>
<div style="left:2308px;top:1215px;width:28px;height:28px;background:#262626;border:3px solid #000;box-sizing:border-box;"></div>
<svg style="left:2308px;top:1215px" width="28" height="28" viewBox="0 0 28 28"><path d="M7 14.2l4.8 5.2 9-11" fill="none" stroke="#4a86c8" stroke-width="3.3" stroke-linejoin="miter"/></svg>
<div class="t" style="left:2342.90px;top:1218.00px;font-family:'Liberation Sans';font-size:20px;color:#eeeeee;letter-spacing:0.120px;">select config markers</div>
<div class="t" style="left:2088.00px;top:1259.40px;font-family:'Liberation Sans';font-size:20px;color:#eeeeee;letter-spacing:0.489px;">Manipulate</div>
<div style="left:2094.7px;top:1305px;width:96.3px;height:20px;background:radial-gradient(ellipse at center,#353535 40%,#2a2a2a 100%);border:3px solid #000;border-radius:11px;box-sizing:border-box;box-shadow:0 2px 4px rgba(0,0,0,.35);"></div>
<div style="left:2203px;top:1305px;width:98.3px;height:20px;background:radial-gradient(ellipse at center,#353535 40%,#2a2a2a 100%);border:3px solid #000;border-radius:11px;box-sizing:border-box;box-shadow:0 2px 4px rgba(0,0,0,.35);"></div>
</body></html>
